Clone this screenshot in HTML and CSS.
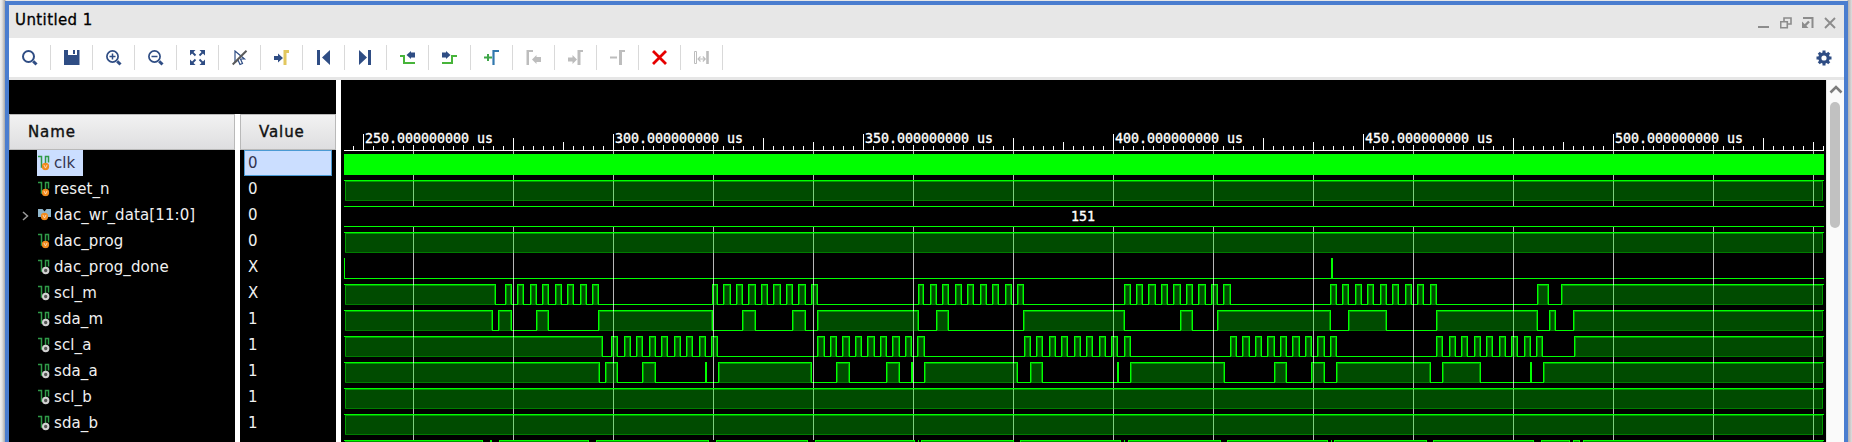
FILE: index.html
```html
<!DOCTYPE html>
<html lang="en">
<head>
<meta charset="utf-8">
<title>Untitled 1</title>
<link rel="stylesheet" href="styles.css">
</head>
<body>
<svg class="defs" width="0" height="0" aria-hidden="true">
  <defs>
    <symbol id="sig" viewBox="0 0 13 16">
      <path d="M0 1.500h3.500v10.500h4V1.500h3v6" fill="none" stroke="#2f9a48" stroke-width="1.500"/>
    </symbol>
    <symbol id="vbadge" viewBox="0 0 8 8">
      <circle cx="4" cy="4" r="3.700" fill="#f08a1d"/><path d="M2.400 2.400L4 5.600l1.600-3.200" fill="none" stroke="#ffe9d0" stroke-width=".8"/>
    </symbol>
    <symbol id="in" viewBox="0 0 13 16"><use href="#sig" width="13" height="16"/><use href="#vbadge" x="3.500" y="7.500" width="8" height="8"/></symbol>
    <symbol id="out" viewBox="0 0 13 16"><use href="#sig" width="13" height="16"/><circle cx="7.700" cy="11.500" r="2.700" fill="#555" stroke="#d2d2d2" stroke-width="2"/></symbol>
    <symbol id="bus" viewBox="0 0 13 16">
      <path d="M0 2h4.500l2 2.500 2-2.500H13v8H0z" fill="#8fb6cc"/><use href="#vbadge" x="2.500" y="5.500" width="8" height="8"/>
    </symbol>
  </defs>
</svg>
<div class="desktop">
<div class="window">
  <header class="titlebar">
    <h1 class="title">Untitled 1</h1>
    <div class="winbtns">
      <svg width="12" height="12"><path d="M0 10h11" stroke="#8c8c8c" stroke-width="2"/></svg>
      <svg width="12" height="12" fill="none" stroke="#8c8c8c" stroke-width="1.600"><path d="M4 4V1h7v6H8M.7 4.700h6.600v6H.7z"/></svg>
      <svg width="12" height="12" fill="none" stroke="#8c8c8c" stroke-width="2"><path d="M1 1h9.500v10"/><path d="M7 4.500L3 8.500" stroke-width="2.400"/><path d="M0 4.500V11h6.500z" fill="#8c8c8c" stroke="none"/></svg>
      <svg width="12" height="12"><path d="M1 1l10 10M11 1L1 11" stroke="#8c8c8c" stroke-width="1.900"/></svg>
    </div>
  </header>
  <nav class="toolbar">
    <span class="tool"><svg width="16" height="16" fill="none" stroke="#2f4d84"><circle cx="6.500" cy="6.500" r="5.500" stroke-width="2"/><path d="M11.200 11.200l3.300 3.300" stroke-width="3"/></svg></span>
    <span class="tool"><svg width="16" height="16"><path d="M0 0h4v5h9V0h2.500v15H0z" fill="#2f4d84"/><path d="M9 0h2v4H9z" fill="#2f4d84"/></svg></span>
    <span class="tool"><svg width="16" height="16" fill="none" stroke="#2f4d84"><circle cx="6.500" cy="6.500" r="5.600" stroke-width="1.700"/><path d="M3.500 6.500h6M6.500 3.500v6" stroke-width="1.500"/><path d="M11.200 11.200l3.300 3.300" stroke-width="3"/></svg></span>
    <span class="tool"><svg width="16" height="16" fill="none" stroke="#2f4d84"><circle cx="6.500" cy="6.500" r="5.600" stroke-width="1.700"/><path d="M3.500 6.500h6" stroke-width="1.500"/><path d="M11.200 11.200l3.300 3.300" stroke-width="3"/></svg></span>
    <span class="tool"><svg width="16" height="16" fill="#2f4d84"><path d="M0 0h5.500L0 5.500zM15 0H9.500L15 5.500zM0 15h5.500L0 9.500zM15 15H9.500L15 9.500z"/><path d="M1 1l4.500 4.500M14 1L9.500 5.500M1 14l4.500-4.500M14 14L9.500 9.500" stroke="#2f4d84" stroke-width="1.800"/></svg></span>
    <span class="tool"><svg width="16" height="16" fill="none"><path d="M3 1v11.500l3-2.500 2 4.500 2.500-1-2-4.500h4z" stroke="#2f4d84" stroke-width="1.200"/><path d="M.7 14.500L14.500.7" stroke="#5a5a5a" stroke-width="2"/></svg></span>
    <span class="tool"><svg width="16" height="16"><path d="M0 6h4V3.500l5 4.500-5 4.500V10H0z" fill="#2f4d84"/><path d="M9.500 15V0H15v3h-2.500v12z" fill="#e2c75f"/></svg></span>
    <span class="tool"><svg width="16" height="16" fill="#2f4d84"><path d="M1 0h3v15H1zM14 0v15L6 7.500z"/></svg></span>
    <span class="tool"><svg width="16" height="16" fill="#2f4d84"><path d="M10 0h3v15h-3zM1 0v15l8-7.500z"/></svg></span>
    <span class="tool"><svg width="16" height="16"><path d="M0 6h4v7h11" fill="none" stroke="#47b43a" stroke-width="2"/><path d="M15 2.500h-4V1L6.500 5 11 9V7.500h4z" fill="#2f4d84"/></svg></span>
    <span class="tool"><svg width="16" height="16"><path d="M0 13h10V6h5" fill="none" stroke="#47b43a" stroke-width="2"/><path d="M0 2.500h4V1l4.500 4L4 9V7.500H0z" fill="#2f4d84"/></svg></span>
    <span class="tool"><svg width="16" height="16" fill="none"><path d="M0 7.500h8M4 4v7" stroke="#3fa648" stroke-width="2"/><path d="M9.500 15V1H15" stroke="#3278ae" stroke-width="2.200"/></svg></span>
    <span class="tool"><svg width="16" height="16" fill="#bdbdbd"><path d="M.5 15V0H7v2H3v13zM15 7h-4.500V5L6 9.500l4.500 4.500v-2H15z"/></svg></span>
    <span class="tool"><svg width="16" height="16" fill="#bdbdbd"><path d="M9.500 15V0H15v2h-2.500v13zM0 7.500h4.500V5L9 9.500 4.500 14v-2.500H0z"/></svg></span>
    <span class="tool"><svg width="16" height="16" fill="#bdbdbd"><path d="M9 15V0h6v2h-3v13zM0 6.500h7v2H0z"/></svg></span>
    <span class="tool"><svg width="16" height="16"><path d="M1 1l13 13M14 1L1 14" stroke="#e60000" stroke-width="2.800"/></svg></span>
    <span class="tool"><svg width="16" height="16" fill="none" stroke="#bdbdbd"><path d="M.5 1.500h2v12h-2z"/><path d="M13.500 1v13" stroke-width="2.600"/><path d="M4 9h7M6.500 6.500L4 9l2.500 2.500M8.800 6.500L11.300 9l-2.500 2.500" stroke-width="1.100"/></svg></span>
    <span class="gear"><svg width="16" height="16" viewBox="-8 -8 16 16" fill="none" stroke="#2f4d84"><circle r="4.200" stroke-width="3.200"/><path d="M0-7.500v3M0 7.500v-3M-7.500 0h3M7.500 0h-3M-5.200-5.200l2 2M5.200 5.200l-2-2M-5.200 5.200l2-2M5.200-5.200l-2 2" stroke-width="3"/></svg></span>
  </nav>
  <main class="content">
    <section class="signals">
      <div class="spacer"></div>
      <div class="cols">
        <div class="names">
          <div class="head">Name</div>
          <div class="row"><span class="sel"><svg width="13" height="16"><use href="#in"/></svg>clk</span></div>
          <div class="row"><svg width="13" height="16"><use href="#in"/></svg>reset_n</div>
          <div class="row"><svg class="chev" width="7" height="10"><path d="M1 1l4.500 4L1 9" fill="none" stroke="#9a9a9a" stroke-width="1.500"/></svg><svg width="13" height="16"><use href="#bus"/></svg>dac_wr_data[11:0]</div>
          <div class="row"><svg width="13" height="16"><use href="#in"/></svg>dac_prog</div>
          <div class="row"><svg width="13" height="16"><use href="#out"/></svg>dac_prog_done</div>
          <div class="row"><svg width="13" height="16"><use href="#out"/></svg>scl_m</div>
          <div class="row"><svg width="13" height="16"><use href="#out"/></svg>sda_m</div>
          <div class="row"><svg width="13" height="16"><use href="#out"/></svg>scl_a</div>
          <div class="row"><svg width="13" height="16"><use href="#out"/></svg>sda_a</div>
          <div class="row"><svg width="13" height="16"><use href="#out"/></svg>scl_b</div>
          <div class="row"><svg width="13" height="16"><use href="#out"/></svg>sda_b</div>
        </div>
        <div class="values">
          <div class="head">Value</div>
          <div class="val active">0</div>
          <div class="val">0</div>
          <div class="val">0</div>
          <div class="val">0</div>
          <div class="val">X</div>
          <div class="val">X</div>
          <div class="val">1</div>
          <div class="val">1</div>
          <div class="val">1</div>
          <div class="val">1</div>
          <div class="val">1</div>
        </div>
      </div>
    </section>
    <svg id="wave" class="wave" viewBox="341 80 1485 362" width="1485" height="362" shape-rendering="crispEdges"></svg>
    <aside class="scroll">
      <svg width="14" height="9"><path d="M1.500 7.500L7 2l5.500 5.500" fill="none" stroke="#7c7c7c" stroke-width="2.600"/></svg>
      <div class="thumb"></div>
    </aside>
  </main>
</div>
</div>
<script src="wave.js"></script>
</body>
</html>
```
FILE: styles.css
```css
* { box-sizing: border-box; }
body {
  margin: 0;
  height: 442px;
  overflow: hidden;
  font-family: "DejaVu Sans", sans-serif;
  font-size: 15px;
}
.defs { position: absolute; }
.desktop {
  width: 1852px;
  height: 442px;
  padding: 1px 4px 0 5px;
  background: linear-gradient(90deg, #f0f0f0 0, #e2e2e2 2px, #a8a8a8 5px, #e7e7e7 6px, #e7e7e7 1847px, #b2b2b2 1848px, #dedede 1852px);
}
.window {
  height: 445px;
  border: 4px solid #4a7dcf;
  background: #fff;
}
.titlebar {
  height: 33px;
  display: flex;
  justify-content: space-between;
  background: #e7e7e7;
  padding: 0 8px 0 6px;
}
.title {
  margin: 0;
  font-size: 15px;
  font-weight: 400;
  line-height: 31px;
  letter-spacing: .4px;
  color: #000;
  -webkit-text-stroke: .3px #000;
}
.winbtns { display: flex; gap: 10px; padding-top: 12px; }
.toolbar {
  height: 42px;
  display: flex;
  align-items: flex-start;
  border-bottom: 3px solid #e6e6e6;
  padding-top: 7px;
}
.tool {
  width: 42px;
  height: 25px;
  padding: 5px 0 0 13px;
  border-right: 1px solid #d9d9d9;
}
.tool svg, .gear svg { display: block; }
.gear { margin-left: auto; padding: 5px 12px 0 0; }
.content { display: flex; height: 362px; }
.signals { width: 327px; flex: none; }
.spacer { height: 34px; background: #000; }
.cols { display: flex; gap: 5px; height: 328px; }
.names { width: 226px; background: #000; }
.values { width: 96px; background: #000; }
.head {
  height: 36px;
  border: 1px solid #b9b9b9;
  background: linear-gradient(#f2f2f2, #dedee0);
  padding-left: 18px;
  font-size: 15px;
  line-height: 35px;
  letter-spacing: .9px;
  color: #111;
  -webkit-text-stroke: .4px #111;
}
.row {
  height: 26px;
  display: flex;
  align-items: center;
  padding-left: 29px;
  color: #f0f0f0;
  letter-spacing: .1px;
  white-space: nowrap;
  position: relative;
}
.row svg { margin-right: 3px; flex: none; }
.row .chev { position: absolute; left: 13px; top: 9px; }
.sel {
  display: flex;
  align-items: center;
  height: 26px;
  width: 46px;
  margin-left: -1px;
  padding-left: 1px;
  background: #cbdeff;
  color: #33334d;
}
.val {
  height: 26px;
  line-height: 26px;
  padding-left: 8px;
  color: #f0f0f0;
}
.val.active {
  margin: 0 4px;
  padding-left: 3px;
  line-height: 24px;
  border: 1px solid #4a9ad4;
  background: #cbdeff;
  color: #33334d;
}
.wave { display: block; flex: none; margin-left: 5px; background: #000; }
.wave text {
  font-family: "DejaVu Sans Mono", monospace;
  font-size: 13.3px;
  fill: #fff;
  stroke: #fff;
  stroke-width: .35px;
}
.scroll {
  width: 18px;
  background: #fafafa;
  border-left: 1px solid #e6e6e6;
  padding: 5px 0 0 2px;
}
.scroll svg { display: block; }
.thumb {
  width: 10px;
  height: 126px;
  margin: 8px 0 0 1px;
  border-radius: 5px;
  background: #c1c1c1;
}
```
FILE: wave.js
```javascript
// Waveform geometry: every trace spans START..END and alternates level at each edge.
const START = 344, END = 1824;
const out = [];
const rect = (x, y, w, h, fill) => out.push(`<rect x="${x}" y="${y}" width="${w}" height="${h}" fill="${fill}"/>`);

function trace(y, edges, high = true) {
  let from = START, level = high;
  const stops = edges.concat(END);
  stops.forEach((to, i) => {
    const last = i === edges.length;
    const lineEnd = last ? to : to + 1;
    if (level) {
      const left = from + 1, width = (last ? END - 1 : to) - left;
      if (width > 1) {
        rect(left, y + 1, width, 20, '#009a00');
        rect(left, y + 20, width, 1, '#007c00');
        if (width > 2) rect(left + 1, y + 2, width - 2, 18, '#004b00');
      }
      rect(from, y, lineEnd - from, 1, '#00ff00');
    } else {
      rect(from, y + 20, lineEnd - from, 1, '#00ff00');
    }
    if (!last) rect(to, y, 1, 21, '#00ff00');
    from = to;
    level = !level;
  });
}

const sclM = [495,505,511,517,523,530,536,542,548,555,561,567,573,580,586,592,598,
  712,717,723,730,736,742,748,755,761,767,773,780,786,792,798,805,811,817,
  918,923,930,936,942,948,955,961,967,973,980,986,992,998,1005,1011,1017,1023,
  1124,1130,1136,1142,1148,1155,1161,1167,1173,1180,1186,1192,1198,1205,1211,1217,1223,1230,
  1330,1336,1342,1348,1355,1361,1367,1373,1380,1386,1392,1398,1405,1411,1417,1423,1430,1436,
  1537,1548,1561];
const sdaM = [492,498,511,536,548,598,712,742,755,792,805,817,918,936,948,1023,1124,1180,1192,1217,
  1330,1348,1386,1436,1537,1549,1555,1573];
const sclA = [602,611,617,624,630,636,642,649,655,661,667,674,680,686,692,699,705,711,717,
  817,824,830,836,842,849,855,861,867,874,880,886,892,899,905,911,917,924,
  1024,1030,1036,1042,1049,1055,1061,1067,1074,1080,1086,1092,1099,1105,1111,1117,1124,1130,
  1230,1236,1242,1249,1255,1261,1267,1274,1280,1286,1292,1299,1305,1311,1317,1324,1330,1336,
  1436,1442,1449,1455,1461,1467,1474,1480,1486,1492,1499,1505,1511,1517,1524,1530,1536,1542,1574];
const sdaA = [599,605,617,642,655,705,706,718,811,836,849,886,899,911,912,924,1017,1030,1042,
  1117,1118,1130,1224,1274,1286,1311,1324,1336,1430,1442,1480,1530,1531,1543];
const next = [482,490,491,499,588,596,708,716,807,815,914,918,918,921,1013,1020,1120,1124,1124,1128,
  1220,1227,1327,1331,1331,1334,1426,1433,1533,1541,1569,1573,1579,1583];

trace(180, []);
trace(232, []);
rect(START, 258, 1, 21, '#00ff00');
trace(258, [1331, 1332], false);
trace(284, sclM);
trace(310, sdaM);
trace(336, sclA);
trace(362, sdaA);
trace(388, []);
trace(414, []);
trace(440, next);

// grid lines
for (let x = 413; x < END; x += 100) {
  rect(x, 151, 1, 289, 'rgba(255,255,255,.72)');
  for (let y of [180, 232, 388, 414]) rect(x, y + 1, 1, 20, '#7dcf7d');
  for (const [y, edges] of [[284, sclM], [310, sdaM], [336, sclA], [362, sdaA]]) {
    if (edges.filter(e => e <= x).length % 2 === 0) rect(x, y + 1, 1, 20, '#7dcf7d');
  }
}

// clock burst and bus
rect(START, 154, END - START, 21, '#00ff00');
rect(START, 206, END - START, 21, '#000');
rect(START, 206, END - START, 1, '#00ff00');
rect(START, 226, END - START, 1, '#00ff00');
for (const y of [180, 232, 388, 414]) rect(START, y, END - START, 1, '#00ff00');

// ruler
rect(START, 150, END - START, 1, '#fff');
for (let x = 353; x < END; x += 10) {
  const k = (x - 363 + 250) % 250;
  const top = { 0: 134, 50: 145, 100: 145, 150: 138, 200: 142 }[k] || 146;
  rect(x, top, 1, 150 - top, '#fff');
}
for (let i = 0; i < 6; i++) {
  out.push(`<text x="${365 + 250 * i}" y="143">${250 + 50 * i}.000000000 us</text>`);
}
out.push('<text x="1071" y="221">151</text>');
document.getElementById('wave').innerHTML = out.join('');
```
